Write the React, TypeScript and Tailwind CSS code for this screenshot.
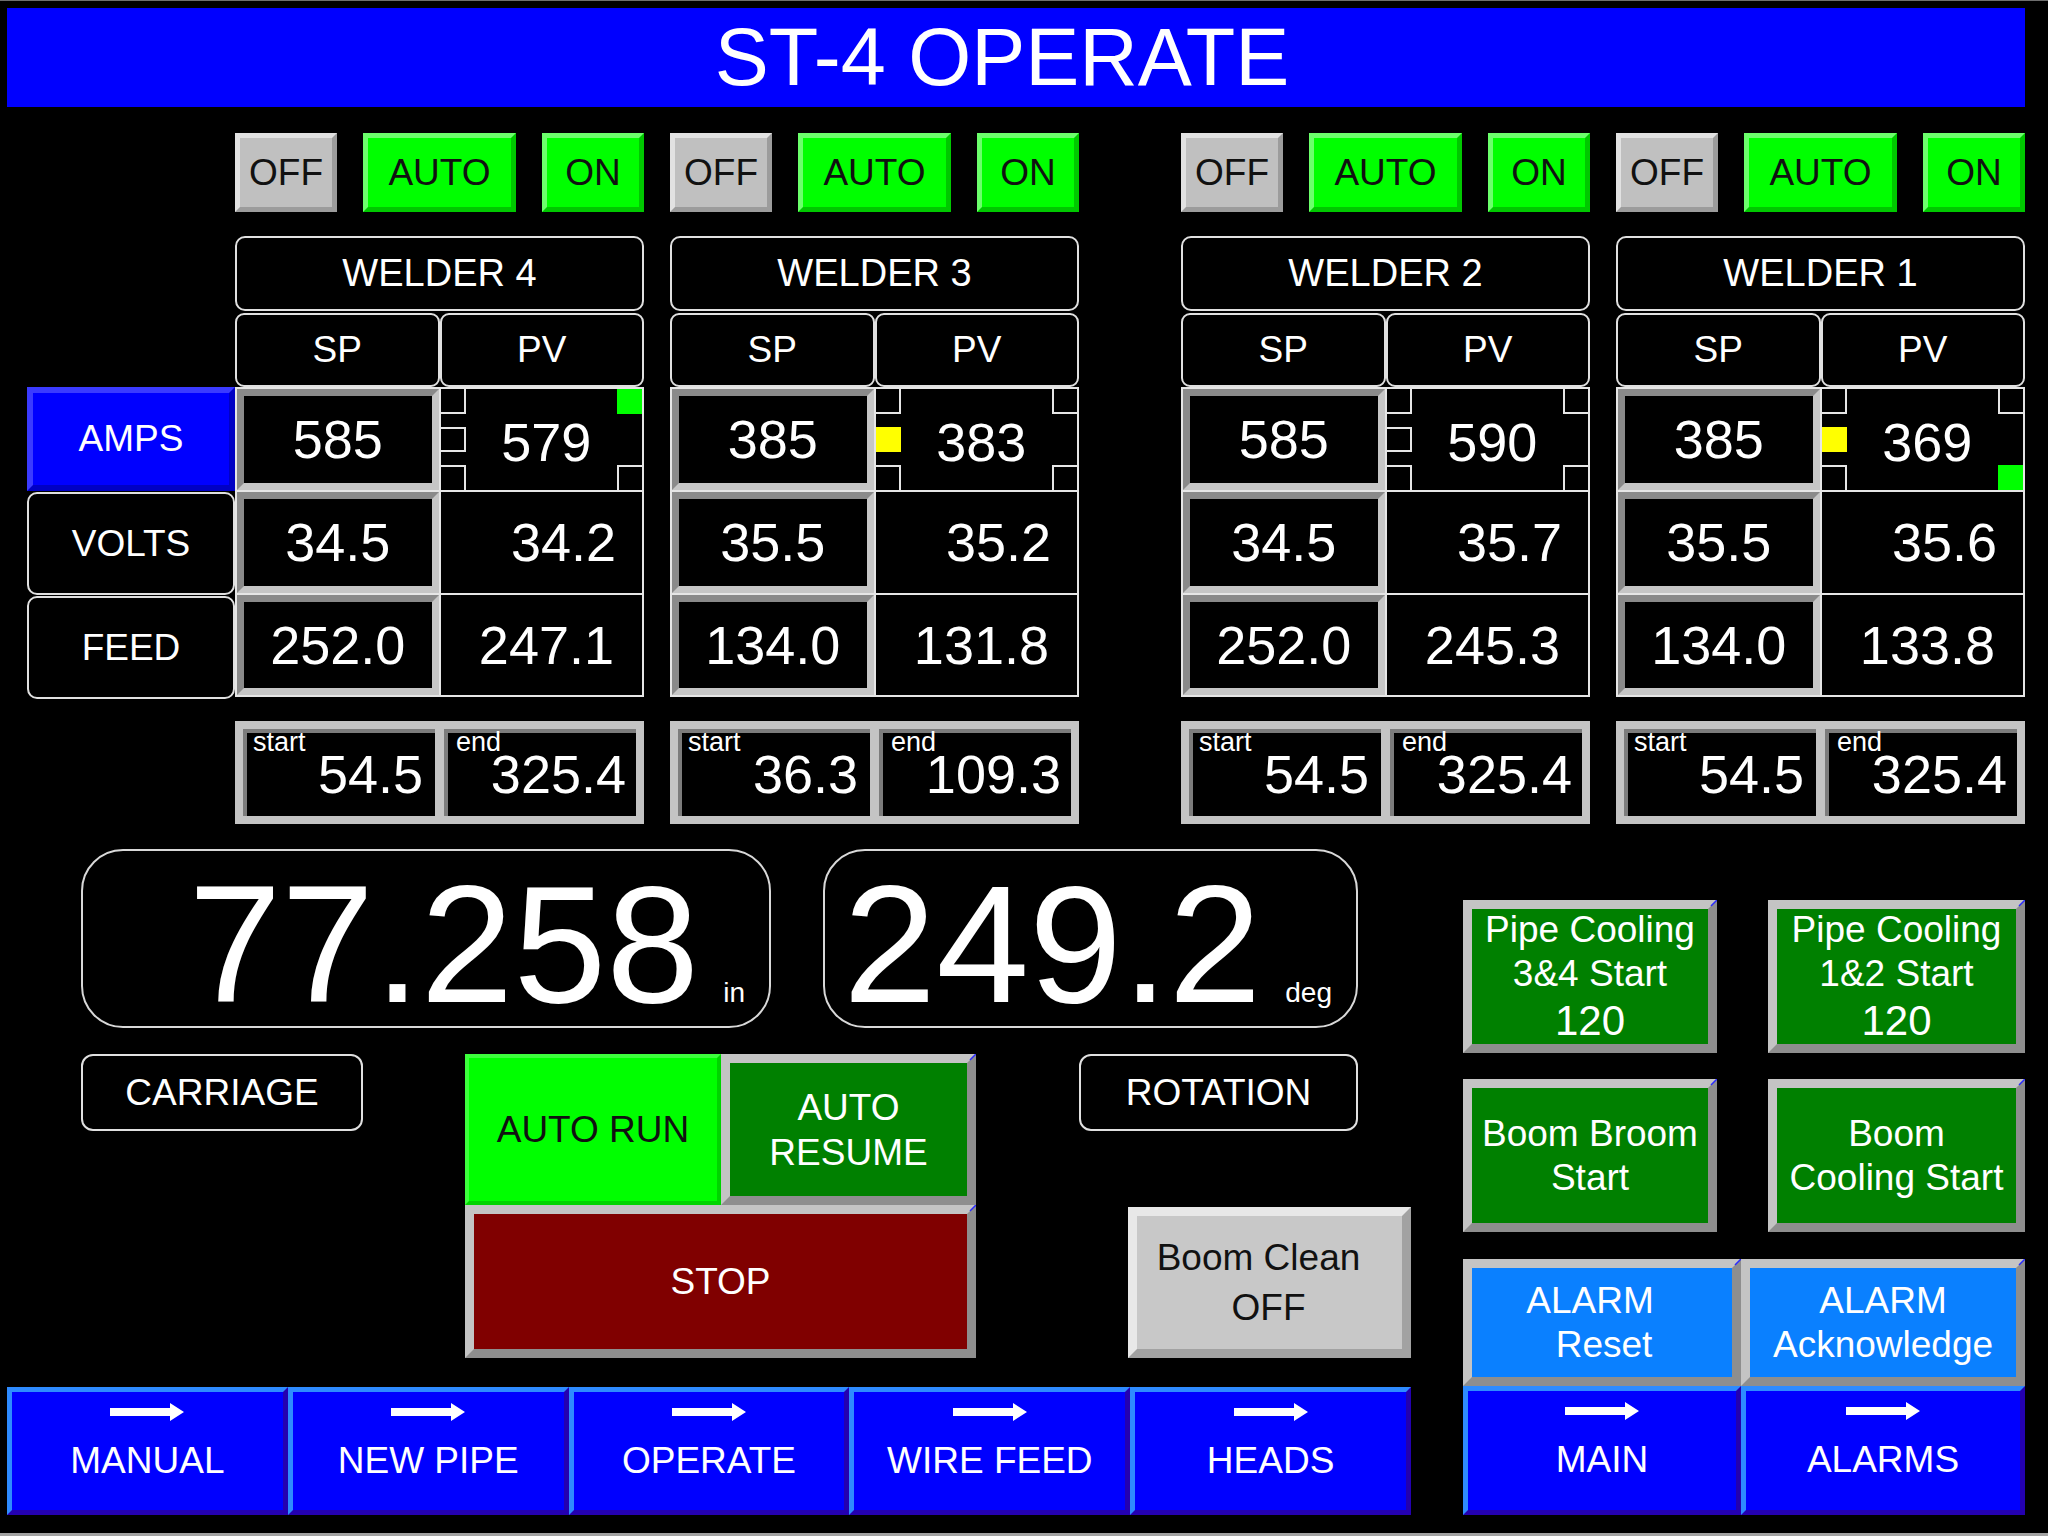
import { clsx } from "clsx";

type Lamp = "none" | "yellow" | "green";

interface WelderData {
  name: string;
  amps: [string, string];
  volts: [string, string];
  feed: [string, string];
  start: string;
  end: string;
  leftMid: Lamp;
  rightTop: Lamp;
  rightBottom: Lamp;
}

const welders: WelderData[] = [
  { name: "WELDER 4", amps: ["585", "579"], volts: ["34.5", "34.2"], feed: ["252.0", "247.1"], start: "54.5", end: "325.4", leftMid: "none", rightTop: "green", rightBottom: "none" },
  { name: "WELDER 3", amps: ["385", "383"], volts: ["35.5", "35.2"], feed: ["134.0", "131.8"], start: "36.3", end: "109.3", leftMid: "yellow", rightTop: "none", rightBottom: "none" },
  { name: "WELDER 2", amps: ["585", "590"], volts: ["34.5", "35.7"], feed: ["252.0", "245.3"], start: "54.5", end: "325.4", leftMid: "none", rightTop: "none", rightBottom: "none" },
  { name: "WELDER 1", amps: ["385", "369"], volts: ["35.5", "35.6"], feed: ["134.0", "133.8"], start: "54.5", end: "325.4", leftMid: "yellow", rightTop: "none", rightBottom: "green" },
];

// raised gray frame used by the green / red / blue command buttons
const frame =
  "relative border-[9px] border-t-[#c4c4c4] border-l-[#c4c4c4] border-r-[#8e8e8e] border-b-[#8e8e8e]";

// the little blue miter tick the HMI draws on the top-right corner of framed buttons
const Corner = () => (
  <svg className="absolute -top-[9px] -right-[9px]" width="9" height="9" viewBox="0 0 9 9">
    <path d="M9 0L3 6" stroke="#2a2aff" strokeWidth="1.5" />
  </svg>
);

const Indicator = ({ lamp, pos, edges }: { lamp: Lamp; pos: string; edges: string }) => (
  <div
    className={clsx(
      "absolute w-[25px] h-[25px]",
      pos,
      lamp === "none" && edges,
      lamp === "none" && "border-[#e6e6e6]",
      lamp === "yellow" && "bg-[#ffff00]",
      lamp === "green" && "bg-[#00ff00]"
    )}
  />
);

const ModeButtons = () => (
  <div className="flex h-[79px] gap-[26px] text-[37px] text-[#111]">
    <div className="w-[102px] flex items-center justify-center bg-[#c0c0c0] border-[5px] border-t-[#e2e2e2] border-l-[#e2e2e2] border-r-[#9c9c9c] border-b-[#9c9c9c]">
      OFF
    </div>
    <div className="w-[153px] flex items-center justify-center bg-[#00ff00] border-[5px] border-t-[#6bff6b] border-l-[#6bff6b] border-r-[#00c800] border-b-[#00c800]">
      AUTO
    </div>
    <div className="w-[102px] flex items-center justify-center bg-[#00ff00] border-[5px] border-t-[#6bff6b] border-l-[#6bff6b] border-r-[#00c800] border-b-[#00c800]">
      ON
    </div>
  </div>
);

const SpCell = ({ value }: { value: string }) => (
  <div className="bg-black border-[7px] border-t-[#8a8a8a] border-l-[#8a8a8a] border-r-[#c6c6c6] border-b-[#c6c6c6] flex items-center justify-center text-[54px]">
    {value}
  </div>
);

const Welder = ({ w, className }: { w: WelderData; className?: string }) => (
  <div className={clsx("w-[409px] flex flex-col", className)}>
    <ModeButtons />
    <div className="mt-[24px] h-[75px] rounded-[10px] border-2 border-[#e0e0e0] flex items-center justify-center text-[38px]">
      {w.name}
    </div>
    <div className="mt-[2px] h-[74px] flex text-[37px]">
      <div className="flex-1 rounded-[9px] border-2 border-[#e0e0e0] flex items-center justify-center">SP</div>
      <div className="flex-1 rounded-[9px] border-2 border-[#e0e0e0] flex items-center justify-center">PV</div>
    </div>
    <div className="grid grid-cols-2 grid-rows-[101px_101px_100px] gap-[2px] p-[2px] bg-[#e6e6e6]">
      <SpCell value={w.amps[0]} />
      <div className="relative bg-black flex items-center justify-center text-[54px]">
        <Indicator lamp="none" pos="left-0 top-0" edges="border-r-2 border-b-2" />
        <Indicator lamp={w.leftMid} pos="left-0 top-[38px]" edges="border-t-2 border-r-2 border-b-2" />
        <Indicator lamp="none" pos="left-0 bottom-0" edges="border-t-2 border-r-2" />
        <Indicator lamp={w.rightTop} pos="right-0 top-0" edges="border-l-2 border-b-2" />
        <Indicator lamp={w.rightBottom} pos="right-0 bottom-0" edges="border-l-2 border-t-2" />
        <span className="ml-[10px] mt-[6px]">{w.amps[1]}</span>
      </div>
      <SpCell value={w.volts[0]} />
      <div className="bg-black flex items-center justify-end pr-[26px] text-[54px]">{w.volts[1]}</div>
      <SpCell value={w.feed[0]} />
      <div className="bg-black flex items-center justify-end pr-[28px] text-[54px]">{w.feed[1]}</div>
    </div>
    <div className="mt-[24px] h-[103px] flex gap-[9px] p-[8px] bg-[#c4c4c4]">
      <div className="flex-1 flex flex-col bg-black border-t-4 border-l-4 border-t-[#7c7c7c] border-l-[#7c7c7c]">
        <span className="pl-[6px] -mt-[4px] text-[27px] leading-none">start</span>
        <span className="-mt-[9px] pr-[12px] text-right text-[54px] leading-none">{w.start}</span>
      </div>
      <div className="flex-1 flex flex-col bg-black border-t-4 border-l-4 border-t-[#7c7c7c] border-l-[#7c7c7c]">
        <span className="pl-[8px] -mt-[4px] text-[27px] leading-none">end</span>
        <span className="-mt-[9px] pr-[10px] text-right text-[54px] leading-none">{w.end}</span>
      </div>
    </div>
  </div>
);

const NavButton = ({ label, className }: { label: string; className?: string }) => (
  <div
    className={clsx(
      "flex flex-col items-center bg-[#0000ff] border-[5px] border-t-[#2e8bff] border-l-[#2e8bff] border-r-[#2400b0] border-b-[#2400b0] pt-[11px]",
      className
    )}
  >
    <svg width="74" height="18" viewBox="0 0 74 18">
      <path d="M0 5H60V0L74 9L60 18V13H0Z" fill="#fff" />
    </svg>
    <div className="mt-[21px] text-[37px] leading-none">{label}</div>
  </div>
);

export default function App() {
  return (
    <div className="w-[2048px] h-[1536px] overflow-hidden bg-black text-white font-['Liberation_Sans',Arial,sans-serif] border-t border-t-[#6e6e6e] border-b-[3px] border-b-[#a3a3a3] pl-[7px]">
      {/* title bar */}
      <div className="mt-[7px] w-[2018px] h-[99px] pr-[28px] bg-[#0000ff] flex items-center justify-center text-[81px] leading-none">
        ST-4 OPERATE
      </div>

      {/* welder table */}
      <div className="mt-[26px] flex">
        <div className="w-[228px] pl-[20px] flex flex-col text-[37px]">
          <div className="h-[254px]" />
          <div className="h-[104px] flex items-center justify-center bg-[#0000ff] border-[6px] border-t-[#3b3bff] border-l-[#3b3bff] border-r-[#0000c4] border-b-[#0000c4]">
            AMPS
          </div>
          <div className="h-[103px] mt-[1px] rounded-[10px] border-2 border-[#e0e0e0] flex items-center justify-center">
            VOLTS
          </div>
          <div className="h-[103px] mt-[1px] rounded-[10px] border-2 border-[#e0e0e0] flex items-center justify-center">
            FEED
          </div>
        </div>
        <Welder w={welders[0]} />
        <Welder w={welders[1]} className="ml-[26px]" />
        <Welder w={welders[2]} className="ml-[102px]" />
        <Welder w={welders[3]} className="ml-[26px]" />
      </div>

      {/* lower area */}
      <div className="mt-[25px] flex">
        <div className="w-[1404px] flex flex-col">
          <div className="flex h-[179px]">
            <div className="ml-[74px] w-[690px] rounded-[42px] border-2 border-[#d8d8d8] flex items-baseline justify-end pt-[10px] pr-[24px]">
              <span className="text-[167px] leading-none">77.258</span>
              <span className="ml-[24px] text-[28px] leading-none">in</span>
            </div>
            <div className="ml-[52px] w-[535px] rounded-[42px] border-2 border-[#d8d8d8] flex items-baseline justify-end pt-[10px] pr-[24px]">
              <span className="text-[167px] leading-none">249.2</span>
              <span className="ml-[24px] text-[28px] leading-none">deg</span>
            </div>
          </div>

          <div className="mt-[26px] h-[304px] flex text-[37px]">
            <div className="ml-[74px] w-[282px] h-[77px] rounded-[12px] border-2 border-[#e0e0e0] flex items-center justify-center">
              CARRIAGE
            </div>
            <div className="ml-[102px] w-[511px] flex flex-col">
              <div className="h-[151px] flex">
                <div className="w-[256px] bg-[#00ff00] border-[4px] border-t-[#3cff3c] border-l-[#3cff3c] border-r-[#00d400] border-b-[#00d400] flex items-center justify-center text-[#111]">
                  AUTO RUN
                </div>
                <div className={clsx("flex-1 bg-[#008000] flex flex-col items-center justify-center leading-[45px]", frame)}>
                  <Corner />
                  <span>AUTO</span>
                  <span>RESUME</span>
                </div>
              </div>
              <div className={clsx("h-[153px] bg-[#800000] flex items-center justify-center", frame)}>
                <Corner />
                STOP
              </div>
            </div>
            <div className="ml-[103px] w-[332px] flex flex-col">
              <div className="w-[279px] h-[77px] rounded-[12px] border-2 border-[#e0e0e0] flex items-center justify-center">
                ROTATION
              </div>
              <div className="mt-[76px] ml-[49px] w-[283px] h-[151px] pr-[22px] bg-[#c8c8c8] border-[9px] border-t-[#e8e8e8] border-l-[#e8e8e8] border-r-[#a2a2a2] border-b-[#a2a2a2] flex flex-col items-center justify-center leading-[50px] text-[#111]">
                <span>Boom Clean</span>
                <span className="pl-[20px]">OFF</span>
              </div>
            </div>
          </div>

          <div className="mt-[29px] h-[128px] flex">
            {["MANUAL", "NEW PIPE", "OPERATE", "WIRE FEED", "HEADS"].map((l) => (
              <NavButton key={l} label={l} className="flex-1" />
            ))}
          </div>
        </div>

        <div className="ml-[52px] w-[562px] pt-[51px] flex flex-col text-[37px]">
          <div className="h-[153px] flex justify-between">
            <div className={clsx("w-[254px] bg-[#008000] flex flex-col items-center justify-center leading-[44px]", frame)}>
              <Corner />
              <span>Pipe Cooling</span>
              <span>3&amp;4 Start</span>
              <span className="text-[42px] leading-[50px]">120</span>
            </div>
            <div className={clsx("w-[257px] bg-[#008000] flex flex-col items-center justify-center leading-[44px]", frame)}>
              <Corner />
              <span>Pipe Cooling</span>
              <span>1&amp;2 Start</span>
              <span className="text-[42px] leading-[50px]">120</span>
            </div>
          </div>
          <div className="mt-[26px] h-[153px] flex justify-between">
            <div className={clsx("w-[254px] bg-[#008000] flex flex-col items-center justify-center leading-[44px]", frame)}>
              <Corner />
              <span>Boom Broom</span>
              <span>Start</span>
            </div>
            <div className={clsx("w-[257px] bg-[#008000] flex flex-col items-center justify-center leading-[44px]", frame)}>
              <Corner />
              <span>Boom</span>
              <span>Cooling Start</span>
            </div>
          </div>
          <div className="mt-[27px] h-[127px] flex">
            <div className={clsx("w-[278px] pr-[24px] bg-[#0a80ff] flex flex-col items-center justify-center leading-[44px]", frame)}>
              <Corner />
              <span>ALARM</span>
              <span className="pl-[28px]">Reset</span>
            </div>
            <div className={clsx("flex-1 bg-[#0a80ff] flex flex-col items-center justify-center leading-[44px]", frame)}>
              <Corner />
              <span>ALARM</span>
              <span>Acknowledge</span>
            </div>
          </div>
          <div className="h-[129px] flex">
            <NavButton label="MAIN" className="w-[278px]" />
            <NavButton label="ALARMS" className="flex-1" />
          </div>
        </div>
      </div>
    </div>
  );
}
